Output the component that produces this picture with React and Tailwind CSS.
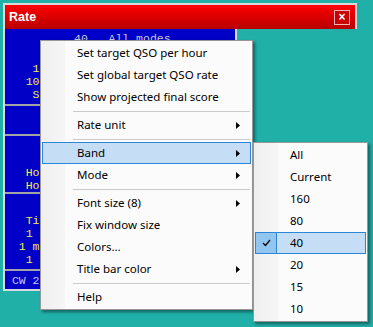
import React from 'react';

const menuFont = { fontFamily: '"Noto Sans", "Open Sans", sans-serif' };

// Small black triangle used for submenu items
const Arrow = () => (
    <svg width="4" height="7" viewBox="0 0 4 7" className="absolute right-[11px] top-[8px]">
        <polygon points="0,0 4,3.5 0,7" fill="#000" />
    </svg>
);

const Check = () => (
    <svg width="9" height="8" viewBox="0 0 9 8">
        <path d="M1 4 L3.5 6.5 L8 1" fill="none" stroke="#000" strokeWidth="1.2" />
    </svg>
);

const MenuItem = ({ label, sub, active }) => (
    <div className={`relative h-[22px] leading-[21px] pl-[35px] mx-[1px] ${active ? 'bg-[#c6def5] outline outline-1 -outline-offset-1 outline-[#2b86d6]' : ''}`}>
        {label}
        {sub && <Arrow />}
    </div>
);

const Sep = () => (
    <div className="h-[6px] flex items-center pl-[32px] pr-[2px]">
        <div className="h-px w-full bg-[#cacaca]" />
    </div>
);

const BandItem = ({ label, checked }) => (
    <div className={`relative h-[22px] leading-[21px] pl-[35px] mx-[1px] ${checked ? 'bg-[#c6def5] outline outline-1 -outline-offset-1 outline-[#2b86d6]' : ''}`}>
        {checked && (
            <div className="absolute left-0 top-0 w-[22px] h-[22px] bg-[#92c5f0] border border-[#2b86d6] flex items-center justify-center">
                <Check />
            </div>
        )}
        {label}
    </div>
);

const Row = ({ text, color = 'text-[#eeee44]', className = '' }) => (
    <div className={`h-[13px] leading-[13px] whitespace-pre ${color} ${className}`}>{text}</div>
);

const Divider = () => <div className="h-[2px] bg-[#a4a4a4]" />;

export default function App() {
    const mainItems = [
        { label: 'Set target QSO per hour' },
        { label: 'Set global target QSO rate' },
        { label: 'Show projected final score' },
        'sep',
        { label: 'Rate unit', sub: true },
        'sep',
        { label: 'Band', sub: true, active: true },
        { label: 'Mode', sub: true },
        'sep',
        { label: 'Font size (8)', sub: true },
        { label: 'Fix window size' },
        { label: 'Colors...' },
        { label: 'Title bar color', sub: true },
        'sep',
        { label: 'Help' },
    ];
    const bands = ['All', 'Current', '160', '80', '40', '20', '15', '10'];

    return (
        <div className="relative w-[373px] h-[327px] bg-[#20b0a8] overflow-hidden">
            {/* Rate window */}
            <div className="absolute left-[3px] top-[3px] flex flex-col">
                <div className="w-[354px] border-2 border-b-0 border-[#dadada]">
                    <div className="h-[24px] bg-linear-to-b from-[#ff0000] to-[#b80000] flex items-center justify-between pl-[4px] pr-[5px]">
                        <span className="text-white font-bold text-[12.5px]" style={{ fontFamily: '"Liberation Sans", Arial, sans-serif' }}>Rate</span>
                        <div className="w-[16px] h-[15px] border border-[#f4b4b4] bg-[#c80000] flex items-center justify-center text-white text-[12px] leading-none font-bold" style={{ fontFamily: '"Liberation Sans", Arial, sans-serif' }}>×</div>
                    </div>
                </div>
                <div className="w-[234px] border-2 border-t-0 border-[#dadada]">
                    <div className="bg-[#0000c6] text-[11.5px]" style={{ fontFamily: '"Liberation Mono", "DejaVu Sans Mono", monospace' }}>
                        <div className="h-[75px] pt-[3px]">
                            <Row text="          40   All modes" color="text-[#c8c8d8]" />
                            <Row text="    10" className="mt-[17px]" />
                            <Row text="   100" />
                            <Row text="    S" />
                        </div>
                        <Divider />
                        <div className="h-[28px]" />
                        <Divider />
                        <div className="h-[56px] pt-[30px]">
                            <Row text="   Hou" />
                            <Row text="   Hou" />
                        </div>
                        <Divider />
                        <div className="h-[75px] pt-[20px]">
                            <Row text="   Ti" />
                            <Row text="   1 d" />
                            <Row text="  1 mu" />
                            <Row text="   1 r" />
                        </div>
                        <Divider />
                        <div className="h-[18px] pt-[3px]">
                            <Row text=" CW 25" color="text-[#c8c8ff]" />
                        </div>
                    </div>
                </div>
            </div>

            {/* Context menu */}
            <div className="absolute left-[40px] top-[40px] w-[213px] border border-[#979797] bg-[#fbfbfb] py-[1px] text-[11.5px] text-black shadow-[2px_2px_3px_rgba(0,0,0,0.45)]" style={menuFont}>
                <div className="absolute left-0 top-0 bottom-0 w-[24px] bg-linear-to-r from-[#efefef] to-[#f6f6f6]" />
                <div className="relative">
                    {mainItems.map((it, i) => it === 'sep' ? <Sep key={i} /> : <MenuItem key={i} {...it} />)}
                </div>
            </div>

            {/* Band submenu */}
            <div className="absolute left-[253px] top-[142px] w-[115px] border border-[#979797] bg-[#fbfbfb] py-[1px] text-[11.5px] text-black shadow-[2px_2px_3px_rgba(0,0,0,0.45)]" style={menuFont}>
                <div className="absolute left-0 top-0 bottom-0 w-[24px] bg-linear-to-r from-[#efefef] to-[#f6f6f6]" />
                <div className="relative">
                    {bands.map((b) => <BandItem key={b} label={b} checked={b === '40'} />)}
                </div>
            </div>
        </div>
    );
}
